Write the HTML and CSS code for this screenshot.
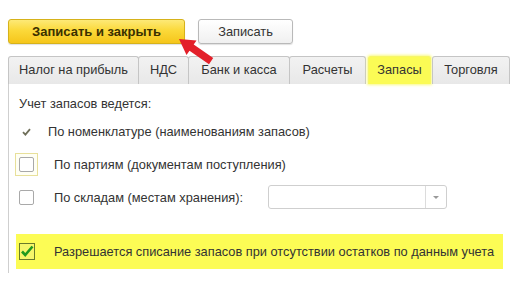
FILE: index.html
```html
<!DOCTYPE html>
<html>
<head>
<meta charset="utf-8">
<link rel="stylesheet" href="styles.css">
</head>
<body>
<div class="page">
  <div class="toolbar">
    <button class="btn btn-primary">Записать и закрыть</button>
    <button class="btn">Записать</button>
  </div>
  <div class="tabs">
    <div class="tab t1">Налог на прибыль</div>
    <div class="tab t2">НДС</div>
    <div class="tab t3">Банк и касса</div>
    <div class="tab t4">Расчеты</div>
    <div class="tab t5 tab-active">Запасы</div>
    <div class="tab t6">Торговля</div>
  </div>
  <div class="panel">
    <div class="title">Учет запасов ведется:</div>
    <div class="row row-tick">
      <svg class="tick" width="9" height="8" viewBox="0 0 9 8"><path d="M1 4.2 L3.4 6.6 L8 1.2" fill="none" stroke="#6f6f5a" stroke-width="1.8"/></svg>
      <span>По номенклатуре (наименованиям запасов)</span>
    </div>
    <div class="row row-cb">
      <span class="cb-wrap focus"><span class="cb"></span></span>
      <span>По партиям (документам поступления)</span>
    </div>
    <div class="row row-cb">
      <span class="cb-wrap"><span class="cb"></span></span>
      <span class="lbl">По складам (местам хранения):</span>
      <div class="select"><span class="select-btn"><span class="caret"></span></span></div>
    </div>
    <div class="row row-hl">
      <span class="cb-wrap"><span class="cb cb-checked"><svg width="14" height="13" viewBox="0 0 14 13"><path d="M2 6.5 L5.2 10 L12.5 1.5" fill="none" stroke="#1f9a1f" stroke-width="2.6"/></svg></span></span>
      <span>Разрешается списание запасов при отсутствии остатков по данным учета</span>
    </div>
  </div>
  <svg class="arrow" width="37" height="28" viewBox="0 0 37 28">
    <path d="M0 0 L17.5 1.5 L14.7 5.6 L34.2 19 L30 25.2 L10.5 11.8 L7.5 16 Z" fill="#e3202a"/>
  </svg>
</div>
</body>
</html>
```
FILE: styles.css
```css
* { box-sizing: border-box; }
html, body { margin: 0; padding: 0; background: #fff; }
body {
  font-family: "Liberation Sans", Arial, sans-serif;
  font-size: 12.8px;
  color: #333;
}
.page {
  position: relative;
  width: 529px;
  height: 285px;
  padding: 19px 0 0 8px;
}
.toolbar {
  display: flex;
  gap: 13px;
  height: 25px;
}
.btn {
  font-family: inherit;
  font-size: 12.8px;
  color: #333;
  height: 25px;
  width: 95px;
  padding: 0;
  border: 1px solid #b9b9b9;
  border-radius: 3px;
  background: linear-gradient(#ffffff, #f0f0f0);
  box-shadow: 0 1px 1px rgba(0,0,0,0.12);
}
.btn-primary {
  width: 177px;
  font-size: 13px;
  font-weight: bold;
  color: #3a3000;
  border-color: #d6b21a;
  background: linear-gradient(#fde977 0%, #fbd93a 45%, #f5c61a 100%);
}
.tabs {
  display: flex;
  margin-top: 12px;
  height: 28px;
}
.tab {
  height: 28px;
  line-height: 26px;
  text-align: center;
  border: 1px solid #c5c5c5;
  border-bottom: none;
  border-radius: 3px 3px 0 0;
  background: linear-gradient(#f2f2f2, #e8e8e8);
  color: #333;
}
.tab + .tab { margin-left: -1px; }
.t1 { width: 131px; }
.t2 { width: 51px; }
.t3 { width: 102px; }
.t4 { width: 77px; }
.t5 { width: 63px; margin-left: 2px !important; }
.t6 { width: 78px; margin-left: 1px !important; }
.tab-active {
  background: #fbfb55;
  border-color: #f6f66a;
  box-shadow: 0 0 3px 1px #fafa80;
}
.panel {
  border-left: 1px solid #cfcfcf;
  height: 189px;
  padding: 12px 0 0 10px;
}
.title { line-height: 15px; }
.row {
  display: flex;
  align-items: center;
}
.row-tick {
  margin-top: 13px;
  height: 15px;
  padding-left: 3px;
}
.tick { margin-right: 17px; }
.row-cb { height: 24px; }
.row-cb:nth-of-type(3) { margin-top: 13px; }
.row-cb:nth-of-type(4) { margin-top: 9px; }
.cb-wrap {
  width: 23px;
  height: 23px;
  margin-left: -4px;
  margin-right: 16px;
  display: flex;
  align-items: center;
  justify-content: center;
  border: 1px solid transparent;
}
.cb-wrap.focus {
  border-color: #e8e09a;
  background: #fffff4;
}
.cb {
  width: 15px;
  height: 15px;
  border: 1px solid #a9a9a9;
  border-radius: 2px;
  background: #fff;
  display: flex;
  align-items: center;
  justify-content: center;
}
.lbl { width: 214px; }
.select {
  width: 179px;
  height: 24px;
  border: 1px solid #cfcfcf;
  border-radius: 3px;
  display: flex;
  justify-content: flex-end;
  background: #fff;
}
.select-btn {
  width: 21px;
  border-left: 1px solid #dcdcdc;
  display: flex;
  align-items: center;
  justify-content: center;
}
.caret {
  width: 0;
  height: 0;
  border-left: 3px solid transparent;
  border-right: 3px solid transparent;
  border-top: 3px solid #999;
}
.row-hl {
  margin-top: 25px;
  margin-left: -3px;
  width: 487px;
  height: 35px;
  background: #fcfc55;
  white-space: nowrap;
}
.row-hl .cb-wrap { margin-left: -1px; margin-right: 16px; }
.cb-checked {
  width: 16px;
  height: 17px;
  border: 1px solid #6a7a2a;
  background: #f6f66a;
  border-radius: 0;
}
.arrow {
  position: absolute;
  left: 179px;
  top: 39px;
}
```
